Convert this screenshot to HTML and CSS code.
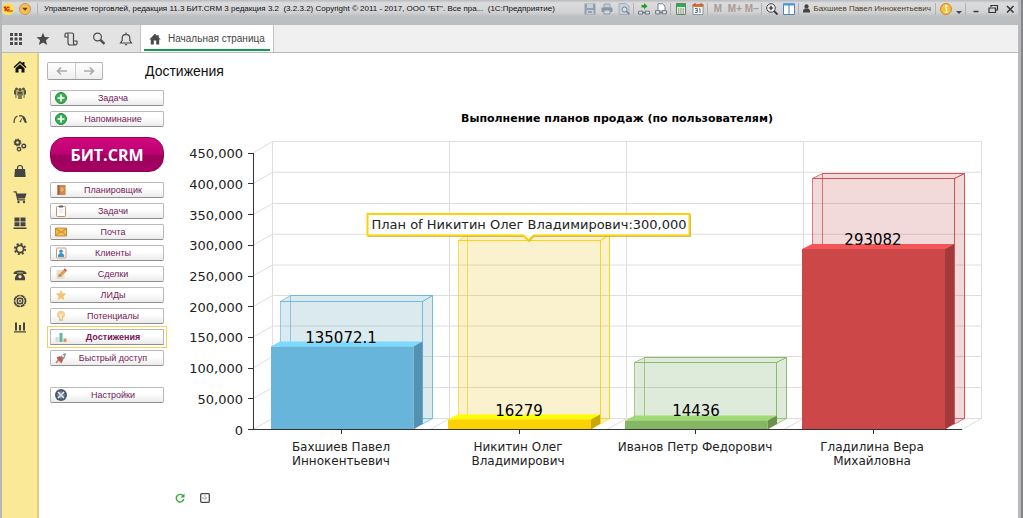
FILE: index.html
```html
<!DOCTYPE html>
<html lang="ru">
<head>
  <meta charset="UTF-8">
  <meta name="viewport" content="width=device-width, initial-scale=1.0">
  <title>Достижения - БИТ.CRM</title>
  <link rel="stylesheet" href="styles.css">
</head>
<body>

<div class="window">
  <!-- Title bar -->
  <header class="titlebar">
    <div class="title-row">
      <button class="round-btn logo-1c" aria-label="1С"><svg viewBox="0 0 12 12"><circle cx="6" cy="6" r="6" fill="#ffe14a"/><path d="M1.800 4.800L3.200 3.800V8.200M7.600 4.700C6.600 3.400 4.600 4 4.600 6s1.300 2 2.300 2H10.800M7.600 6.300H6.300" fill="none" stroke="#d8101c" stroke-width="1.200"/></svg></button>
      <button class="round-btn" aria-label="Меню"><svg viewBox="0 0 12 12"><circle cx="6" cy="6" r="5.500" fill="#f7bd55" stroke="#c99645"/><path d="M3.200 4.800h5.600L6 7.800z" fill="#5e4521"/></svg></button>
      <span class="sep"></span>
      <h1 class="app-title">Управление торговлей, редакция 11.3 БИТ.CRM 3 редакция 3.2&nbsp; (3.2.3.2) Copyright © 2011 - 2017, ООО "БТ". Все пра...&nbsp; (1С:Предприятие)</h1>
      <div class="tools">
        <button aria-label="Сохранить"><svg viewBox="0 0 12 12"><path d="M.5.5h11v11H.5z" fill="#92a1ae"/><path d="M3 1h6v4H3zM2.500 7h7v4h-7z" fill="#c9d0d6"/><path d="M4 8h4v2H4z" fill="#92a1ae"/></svg></button>
        <button aria-label="Печать"><svg viewBox="0 0 12 12"><path d="M3 1h6v4H3z" fill="#c5ccd3" stroke="#98a5b1"/><path d="M.5 4.500h11V9H.5z" fill="#8796a4"/><path d="M3 7h6v4H3z" fill="#d4d9dd" stroke="#8796a4"/></svg></button>
        <button aria-label="Просмотр"><svg viewBox="0 0 12 12"><path d="M1 .5h7l3 3v8H1z" fill="#c8cfd5" stroke="#a5b0ba"/><circle cx="6.500" cy="6.500" r="2.500" fill="#d9e0e5" stroke="#708698"/><path d="M8.300 8.300l3 3" stroke="#708698" stroke-width="1.600"/></svg></button>
        <span class="sep"></span>
        <button aria-label="Получить ссылку"><svg viewBox="0 0 12 12"><path d="M.6 8.200h4.300v2.800H.6zM7.100 8.200h4.300v2.800H7.100zM4 9.600h4" fill="#e5e8eb" stroke="#667481"/><path d="M6 0l3.500 3.300-3.500 3V4.500H3.500V2H6z" fill="#23a126"/></svg></button>
        <button aria-label="Перейти по ссылке"><svg viewBox="0 0 12 12"><path d="M3 7V.8h4.500L10 3v4" fill="#fff" stroke="#71808d"/><path d="M.6 7.700h4.300v3.200H.6zM7.100 7.700h4.300v3.200H7.100zM4 9.300h4" fill="#e5e8eb" stroke="#667481"/></svg></button>
        <span class="sep"></span>
        <button aria-label="Калькулятор"><svg viewBox="0 0 12 12"><path d="M1.500.5h9v11h-9z" fill="#e7ece7" stroke="#688068"/><path d="M2 1h8v3H2z" fill="#24b54a"/><path d="M3 6h6M3 8h6M3 10h6" stroke="#587158" stroke-dasharray="1.300 1"/></svg></button>
        <button aria-label="Календарь"><svg viewBox="0 0 12 12"><path d="M1 1.500h10v10H1z" fill="#fff" stroke="#8491a0"/><path d="M.5 1h11v3H.5z" fill="#d87536"/><path d="M3 0v2.500M9 0v2.500" stroke="#945020"/><path d="M3 5.500h2.300v4H3M3.500 7.500h1.800M7 6.200l1-.7v4.500" fill="none" stroke="#536984"/></svg></button>
        <span class="sep"></span>
        <button class="mem">M</button>
        <button class="mem">M+</button>
        <button class="mem">M−</button>
        <span class="sep"></span>
        <button aria-label="Масштаб"><svg viewBox="0 0 12 12"><circle cx="5" cy="5" r="4.300" fill="#f5f5f5" stroke="#444"/><path d="M8.200 8.200L11.500 11.500" stroke="#333" stroke-width="1.800"/><path d="M2.800 5h4.400M5 2.800v4.400" stroke="#222" stroke-width="1.200"/></svg></button>
        <button aria-label="Окна"><svg viewBox="0 0 12 12"><path d="M.5 1h11v10.500H.5zM6 1v10" fill="#fff" stroke="#5083b0"/><path d="M0 .5h12v2H0z" fill="#3e9bdf"/></svg></button>
        <span class="sep"></span>
        <button class="user"><svg viewBox="0 0 8 10"><circle cx="4" cy="2.600" r="2.400" fill="#444"/><path d="M0 9.500V7l2-2h4l2 2v2.500z" fill="#444"/></svg>Бахшиев Павел Иннокентьевич</button>
        <span class="sep"></span>
        <button aria-label="О программе"><svg viewBox="0 0 12 12"><circle cx="6" cy="6" r="5.500" fill="#f6bd3f" stroke="#c98d25"/><path d="M5 5h1.500v4M4.800 9.200h3M5.600 2.300h1.300v1.300H5.600z" fill="none" stroke="#fff"/></svg></button>
        <button class="narrow" aria-label="Ещё"><svg viewBox="0 0 8 12"><path d="M1 8h6L4 11z" fill="#444"/></svg></button>
        <span class="sep"></span>
        <button aria-label="Свернуть"><svg viewBox="0 0 12 12"><path d="M3.500 8.500h5" stroke="#333" stroke-width="1.400"/></svg></button>
        <button aria-label="Восстановить"><svg viewBox="0 0 12 12"><path d="M4 4V2.500h6.500V7H8.500M2 5h6.500v4.500H2z" fill="none" stroke="#333" stroke-width="1.200"/></svg></button>
        <button aria-label="Закрыть"><svg viewBox="0 0 12 12"><path d="M3 3l6.500 6.500M9.500 3L3 9.500" stroke="#333" stroke-width="1.500"/></svg></button>
      </div>
    </div>
  </header>

  <!-- Tabs -->
  <nav class="tabbar">
    <div class="quick">
      <button aria-label="Разделы"><svg viewBox="0 0 14 14"><path d="M1 1h3v3H1zM5.500 1h3v3h-3zM10 1h3v3h-3zM1 5.500h3v3H1zM5.500 5.500h3v3h-3zM10 5.500h3v3h-3zM1 10h3v3H1zM5.500 10h3v3h-3zM10 10h3v3h-3z" fill="#4a4a4a"/></svg></button>
      <button aria-label="Избранное"><svg viewBox="0 0 14 14"><path d="M7 .8l1.800 4.200 4.700.3-3.600 3 1.200 4.700L7 10.500 2.900 13l1.200-4.700-3.600-3L5.200 5z" fill="#4a4a4a"/></svg></button>
      <button aria-label="История"><svg viewBox="0 0 14 14"><path d="M3.500 5H1V2.500Q1 1 2.500 1H8Q9.500 1 9.500 2.500V9H13v2.300Q13 13 11.500 13H6Q4 13 4 11V2.500Q4 1 2.500 1M9.500 9v2Q9.500 13 11.500 13" fill="none" stroke="#4a4a4a" stroke-width="1.200"/></svg></button>
      <button aria-label="Поиск"><svg viewBox="0 0 14 14"><circle cx="5.500" cy="5" r="3.900" fill="none" stroke="#4a4a4a" stroke-width="1.200"/><path d="M8.300 7.800l4.200 4" stroke="#4a4a4a" stroke-width="2.300"/></svg></button>
      <button aria-label="Оповещения"><svg viewBox="0 0 14 14"><path d="M1.500 11h11L10.800 8.500V5.500Q10.500 2.500 7 2.300 3.500 2.500 3.200 5.500V8.500zM7 .5v2" fill="none" stroke="#4a4a4a" stroke-width="1.200"/><path d="M5.500 12h3L7 13.800z" fill="#4a4a4a"/></svg></button>
    </div>
    <a class="tab active" href="#"><svg viewBox="0 0 12 12"><path d="M6 .8L.3 6.500h1.500V11.500h3V7.500h2.400v4h3V6.500h1.500L9.700 4.500V2H8.300v1.100z" fill="#4a4a4a"/></svg><span>Начальная страница</span></a>
  </nav>

  <div class="workspace">
    <!-- Sections -->
    <nav class="sections">
      <a href="#" aria-label="Главное"><svg viewBox="0 0 14 14"><path d="M7 1L.5 7l1 1L7 3l5.500 5 1-1L11.500 5V2h-2v1.200zM2.500 8.300L7 4.300l4.500 4v4.200h-3V9h-3v3.500h-3z" fill="#111"/></svg></a>
      <a href="#" aria-label="CRM"><svg viewBox="0 0 14 14"><path d="M2.500 4Q1 3 1 5v3l1.500 1v3h1V5zM11.500 4Q13 3 13 5v3l-1.500 1v3h-1V5zM4 5.500h6V9L9 10v3H5v-3L4 9z" fill="#55523f"/><circle cx="7" cy="3.700" r="1.800" fill="#55523f"/><circle cx="3.500" cy="3" r="1.500" fill="#55523f"/><circle cx="10.500" cy="3" r="1.500" fill="#55523f"/><path d="M4 6v5M10 6v5M6 8v5M8 8v5" stroke="#e5d88d" stroke-width=".6"/></svg></a>
      <a href="#" aria-label="Показатели"><svg viewBox="0 0 14 14"><path d="M1 11Q1 5.500 4.500 4.200M6 3.800Q12.500 3 13 11" fill="none" stroke="#55523f" stroke-width="1.300"/><path d="M9.500 5L7.800 10.500 6.400 9.800z" fill="#444"/><path d="M10 5l2.800 5.500" stroke="#444" stroke-width="1.800"/></svg></a>
      <a href="#" aria-label="Процессы"><svg viewBox="0 0 14 14"><g fill="none" stroke="#444"><circle cx="4.500" cy="4.500" r="2.300" stroke-width="1.900"/><circle cx="4.500" cy="4.500" r="3.500" stroke-dasharray="1.300 1.400"/><circle cx="10.800" cy="8" r="1.800" stroke-width="1.400"/><circle cx="6" cy="11.200" r="1.700" stroke-width="1.300"/></g></svg></a>
      <a href="#" aria-label="Продажи"><svg viewBox="0 0 14 14"><path d="M2 5h10l.7 8H1.300z" fill="#444"/><path d="M4.500 7V4Q4.500 1.500 7 1.500T9.500 4v3" fill="none" stroke="#444" stroke-width="1.200"/></svg></a>
      <a href="#" aria-label="Закупки"><svg viewBox="0 0 14 14"><path d="M.5 1.800H3L4.800 9.800H12" fill="none" stroke="#444" stroke-width="1.300"/><path d="M3.500 3.500h10l-1.500 5H4.800z" fill="#444"/><circle cx="5.500" cy="12" r="1.200" fill="#444"/><circle cx="11" cy="12" r="1.200" fill="#444"/></svg></a>
      <a href="#" aria-label="Склад"><svg viewBox="0 0 14 14"><path d="M1.500 1.500h5v4h-5zM7.500 1.500h5v4h-5zM1.500 6.300h5v4h-5zM7.500 6.300h5v4h-5zM.5 11.500h13V13H.5z" fill="#444"/></svg></a>
      <a href="#" aria-label="Производство"><svg viewBox="0 0 14 14"><circle cx="7" cy="7" r="3.600" fill="none" stroke="#444" stroke-width="1.800"/><circle cx="7" cy="7" r="5.200" fill="none" stroke="#444" stroke-width="1.800" stroke-dasharray="2.040 2.040"/></svg></a>
      <a href="#" aria-label="Телефония"><svg viewBox="0 0 14 14"><path d="M.5 6Q0 2.500 7 2.500T13.500 6H9.800V4.500H4.200V6zM4.500 5.300h5l2.500 4v2.900H2V9.300z" fill="#444"/><circle cx="7" cy="8.700" r="1.600" fill="#fae996"/></svg></a>
      <a href="#" aria-label="Поддержка"><svg viewBox="0 0 14 14"><circle cx="7" cy="7" r="5.500" fill="none" stroke="#444" stroke-width="1.700" stroke-dasharray="3.500 .8"/><circle cx="7" cy="7" r="2.800" fill="none" stroke="#444" stroke-width="1.400"/><circle cx="7" cy="7" r="1" fill="#444"/><path d="M2.500 2.500L5 5M11.500 2.500L9 5M2.500 11.500L5 9M11.500 11.500L9 9" stroke="#444"/></svg></a>
      <a href="#" aria-label="Отчёты"><svg viewBox="0 0 14 14"><path d="M2 2.500h2v8H2zM6 5h2v5.500H6zM10 2.500h2v8h-2zM1 11.300h12v1.200H1z" fill="#444"/></svg></a>
    </nav>

    <main class="page">
      <div class="page-head">
        <div class="history">
          <button aria-label="Назад"><svg viewBox="0 0 12 10"><path d="M5 1.500L1.500 5 5 8.500M2 5h9" fill="none" stroke="#aaa" stroke-width="1.700"/></svg></button>
          <button aria-label="Вперёд"><svg viewBox="0 0 12 10"><path d="M7 1.500L10.500 5 7 8.500M10 5H1" fill="none" stroke="#aaa" stroke-width="1.700"/></svg></button>
        </div>
        <h2>Достижения</h2>
      </div>

      <div class="columns">
        <aside class="menu">
          <button class="menu-btn"><svg viewBox="0 0 12 12"><circle cx="6" cy="6" r="5.500" fill="#35ae56" stroke="#25883d"/><path d="M6 2.500v7M2.500 6h7" stroke="#fff" stroke-width="1.700"/></svg><span>Задача</span></button>
          <button class="menu-btn"><svg viewBox="0 0 12 12"><circle cx="6" cy="6" r="5.500" fill="#35ae56" stroke="#25883d"/><path d="M6 2.500v7M2.500 6h7" stroke="#fff" stroke-width="1.700"/></svg><span>Напоминание</span></button>
          <button class="brand">БИТ.CRM</button>
          <button class="menu-btn"><svg viewBox="0 0 12 12"><path d="M2.500 1h8v10h-8z" fill="#c9875a"/><path d="M2.500 1h2v10h-2z" fill="#9e6038"/><path d="M6 4h2v3H6zM10.500 2v2M10.500 5v2M10.500 8v2" fill="#f2b75c" stroke="#f0b25e"/></svg><span>Планировщик</span></button>
          <button class="menu-btn"><svg viewBox="0 0 12 12"><rect x="1.500" y="1.500" width="9" height="10" rx="1" fill="#fff" stroke="#cf8961"/><path d="M4 .5h4v2H4z" fill="#5d656d"/><path d="M3.500 5h5M3.500 7h5" stroke="#ccd4da" stroke-width=".7"/></svg><span>Задачи</span></button>
          <button class="menu-btn"><svg viewBox="0 0 12 12"><path d="M.5 2h11v8H.5z" fill="#f1bd54" stroke="#c78d32"/><path d="M.5 2.500L6 6.500l5.500-4M1 9.500L4.500 6M11 9.500L7.500 6" fill="none" stroke="#a87427" stroke-width=".8"/></svg><span>Почта</span></button>
          <button class="menu-btn"><svg viewBox="0 0 12 12"><rect x="1.500" y="1" width="9.500" height="10" rx="1" fill="#fff" stroke="#d19672"/><circle cx="6" cy="4.200" r="1.800" fill="#3f95c4"/><path d="M3 10V8l2-2h2l2.200 2v2z" fill="#3f95c4"/></svg><span>Клиенты</span></button>
          <button class="menu-btn"><svg viewBox="0 0 12 12"><path d="M1.500 2h8v9h-8z" fill="#e3e1d6"/><path d="M2.500 9.500L4 6.500l5-5L11.500 3.500 6 8.500z" fill="#e79c52"/><path d="M8.500 1.500L10 .5l1.800 1.800L10.800 3.500z" fill="#bc4d3b"/><path d="M4 6.500l2 2" stroke="#9b5635"/></svg><span>Сделки</span></button>
          <button class="menu-btn"><svg viewBox="0 0 12 12"><path d="M6 .8l1.500 3.400 4 .3-3 2.700.8 4L6 9.200 2.700 11.200l.8-4-3-2.700 4-.3z" fill="#f3c477"/></svg><span>ЛИДы</span></button>
          <button class="menu-btn"><svg viewBox="0 0 12 12"><circle cx="6" cy="4.800" r="4" fill="#f8ce8a"/><path d="M4 8h4v3H4z" fill="#ddc69f"/><path d="M4 4l2 1.500L8 4M6 5.500V9" fill="none" stroke="#fff"/></svg><span>Потенциалы</span></button>
          <button class="menu-btn current"><svg viewBox="0 0 12 12"><path d="M.5 6h3v5h-3z" fill="#d2dcd0"/><path d="M4.500 2h3v9h-3z" fill="#5fb7a5"/><path d="M8.500 7.500h3V11h-3z" fill="#df965e"/></svg><span>Достижения</span></button>
          <button class="menu-btn"><svg viewBox="0 0 12 12"><path d="M4.500 7.500Q6 2 11 1 10.500 6 6.500 9z" fill="#879197"/><path d="M5 4L1.500 5.500 3 8l1 1 2.500 2.500L8 8z" fill="#bf5c50"/><path d="M3.500 8L1 11" stroke="#cf7665" stroke-width="1.600"/><circle cx="8" cy="4" r="1" fill="#fff"/></svg><span>Быстрый доступ</span></button>
          <button class="menu-btn settings"><svg viewBox="0 0 12 12"><circle cx="6" cy="6" r="6" fill="#4a5872"/><path d="M3 3l6 6M9 3L3 9" stroke="#fff" stroke-width="1.500"/><path d="M6 2v8M2 6h8" stroke="#b9c4d4" stroke-width=".7"/></svg><span>Настройки</span></button>
        </aside>

        <section class="report">
          <svg class="chart" viewBox="170 100 840 380" role="img" aria-label="Выполнение планов продаж">
            <text class="chart-title" x="617" y="122">Выполнение планов продаж (по пользователям)</text>

            <!-- grid -->
            <path class="grid" d="M253 153l19.500-11.500h709M253 183.700l19.500-11.500h709M253 214.500l19.500-11h709M253 245.200l19.500-11h709M253 276l19.500-11h709M253 306.500l19.500-11h709M253 337.200l19.500-11.200h709M253 368l19.500-11.500h709M253 398.700l19.500-11.200h709M253 429.500l19.500-11h709M272.500 141.500v277M449.500 141.500v277M626.500 141.500v277M803.500 141.500v277M981.500 141.500v277M430 429.500l19.500-11M607 429.500l19.500-11M784 429.500l19.500-11M962 429.500l19.500-11"/>

            <!-- bars: plan behind, fact in front -->
            <g class="bar blue" transform="translate(271 0)">
              <path class="plan" d="M9.500 301.500h142V424H9.500zM19.500 295.500h142V418.500h-142zM9.500 301.500l10-6h142l-10 6zM151.500 301.500l10-6V418.500l-10 5.500z"/>
              <path class="top" d="M0 346.500l9-5h142.500l-9 5z"/>
              <path class="side" d="M142.500 346.500l9-5V424l-9 5.500z"/>
              <path class="front" d="M0 346.500h142.500v83H0z"/>
            </g>
            <g class="bar yellow" transform="translate(448 0)">
              <path class="plan" d="M10.500 240.500h142V424h-142zM19.500 234.500h142V418.500h-142zM10.500 240.500l9-6h142l-9 6zM152.500 240.500l9-6V418.500l-9 5.500z"/>
              <path class="top" d="M0 419.500l10-5h142l-9 5z"/>
              <path class="side" d="M143 419.500l9-5V424l-9 5.500z"/>
              <path class="front" d="M0 419.500h143v10H0z"/>
            </g>
            <g class="bar green" transform="translate(625 0)">
              <path class="plan" d="M9.500 362.500h142V424H9.500zM19.500 357.500h142V418.500h-142zM9.500 362.500l10-5h142l-10 5zM151.500 362.500l10-5V418.500l-10 5.500z"/>
              <path class="top" d="M0 420.500l10-5h142l-9.500 5z"/>
              <path class="side" d="M142.500 420.500l9.500-5V424l-9.500 5.500z"/>
              <path class="front" d="M0 420.500h142.500v9H0z"/>
            </g>
            <g class="bar red" transform="translate(802 0)">
              <path class="plan" d="M10.500 178.500h142V424h-142zM20.500 173.500h142V418.500h-142zM10.500 178.500l10-5h142l-10 5zM152.500 178.500l10-5V418.500l-10 5.500z"/>
              <path class="top" d="M0 249l10-5h142l-9 5z"/>
              <path class="side" d="M143 249l9-5V424l-9 5.500z"/>
              <path class="front" d="M0 249h143v180.500H0z"/>
            </g>

            <!-- axes -->
            <path class="axis" d="M253.500 153v276.500M248 153.500h5M248 183.500h5M248 214.500h5M248 245.500h5M248 276.500h5M248 306.500h5M248 337.500h5M248 368.500h5M248 398.500h5M248 429.500h714M341.500 430v4M519.500 430v4M695.500 430v4M873.500 430v4"/>
            <g class="y-labels">
              <text x="243" y="158">450,000</text>
              <text x="243" y="189">400,000</text>
              <text x="243" y="220">350,000</text>
              <text x="243" y="250">300,000</text>
              <text x="243" y="281">250,000</text>
              <text x="243" y="312">200,000</text>
              <text x="243" y="342">150,000</text>
              <text x="243" y="373">100,000</text>
              <text x="243" y="404">50,000</text>
              <text x="243" y="435">0</text>
            </g>
            <g class="x-labels">
              <text x="341" y="451">Бахшиев Павел<tspan x="341" dy="14">Иннокентьевич</tspan></text>
              <text x="518" y="451">Никитин Олег<tspan x="518" dy="14">Владимирович</tspan></text>
              <text x="695" y="451">Иванов Петр Федорович</text>
              <text x="872" y="451">Гладилина Вера<tspan x="872" dy="14">Михайловна</tspan></text>
            </g>
            <g class="values">
              <text x="341" y="343">135072.1</text>
              <text x="519" y="416">16279</text>
              <text x="696" y="416">14436</text>
              <text x="873" y="245">293082</text>
            </g>

            <!-- balloon -->
            <g class="balloon">
              <path class="shadow" d="M368 215h323v22H534l-5 5-5-5H368z"/>
              <path class="box" d="M367.500 214h322v21.500H533.500l-5 5-5-5h-156z"/>
              <text x="529" y="229">План of Никитин Олег Владимирович:300,000</text>
            </g>
          </svg>
          <div class="report-tools">
            <button aria-label="Обновить"><svg viewBox="0 0 10 10"><path d="M8.200 3A3.800 3.800 0 1 0 8.800 6" fill="none" stroke="#35ad3d" stroke-width="1.400"/><path d="M9.500.5v4h-4z" fill="#35ad3d"/></svg></button>
            <button aria-label="Развернуть"><svg viewBox="0 0 10 10"><rect x=".7" y=".7" width="8.600" height="8.600" rx="1" fill="#fff" stroke="#4a4a4a" stroke-width="1.300"/><path d="M5 2v6M2 5h6" stroke="#999" stroke-dasharray="2 1"/></svg></button>
          </div>
        </section>
      </div>
    </main>
  </div>
</div>

</body>
</html>
```
FILE: styles.css
```css
* {
  box-sizing: border-box;
}

body {
  margin: 0;
  font-family: "Liberation Sans", Arial, sans-serif;
  font-size: 10px;
  color: #222;
}

button {
  font-family: inherit;
  padding: 0;
  border: none;
  background: none;
  cursor: pointer;
}

svg {
  display: block;
}

.window {
  display: flex;
  flex-direction: column;
  min-height: 100vh;
  padding-right: 3px;
  border-left: 2px solid #b6b6ba;
  border-right: 2px solid #85868a;
  background-color: #b9babd;
}

/* Title bar */
.titlebar {
  height: 25px;
  background: linear-gradient(#b9babd 0, #dcdcde 3px, #d2d3d5 12px, #bfc0c2 16px, #bbbcbf 25px);
}

.title-row {
  display: flex;
  align-items: center;
  height: 17px;
}

.round-btn {
  flex: none;
  width: 12px;
  margin-right: 5px;
}

.sep {
  flex: none;
  width: 1px;
  height: 12px;
  margin: 0 1px;
  background-color: #b2b2b5;
}

.app-title {
  margin: 0 0 0 5px;
  font-size: 8px;
  font-weight: normal;
  color: #111;
  white-space: nowrap;
}

.tools {
  display: flex;
  align-items: center;
  margin-left: auto;
}

.tools button {
  display: flex;
  flex: none;
  align-items: center;
  justify-content: center;
  width: 17px;
  height: 16px;
  font-size: 10px;
}

.tools svg {
  width: 12px;
  height: 12px;
}

.tools .mem {
  color: #ab9b93;
  font-weight: bold;
}

.tools .narrow {
  width: 10px;
}

.tools .narrow svg {
  width: 8px;
}

.tools .user {
  gap: 3px;
  width: auto;
  padding: 0 3px;
  font-size: 8px;
  color: #4d3f20;
}

.tools .user svg {
  width: 7px;
  height: 9px;
}

/* Tabs */
.tabbar {
  display: flex;
  height: 28px;
  background-color: #f0f0f0;
  border-bottom: 1px solid #bbb;
}

.quick {
  display: flex;
  justify-content: space-around;
  width: 139px;
  background-color: #e3e3e3;
  border-right: 1px solid #c2c2c2;
}

.quick svg {
  width: 14px;
  height: 14px;
}

.tab {
  display: flex;
  align-items: center;
  gap: 7px;
  padding: 0 8px;
  border-right: 1px solid #c2c2c2;
  background: #fff linear-gradient(#139b50, #139b50) no-repeat center 24px / calc(100% - 6px) 2px;
  color: #444;
  font-size: 10px;
  text-decoration: none;
}

.tab svg {
  width: 12px;
  height: 12px;
}

/* Body */
.workspace {
  display: flex;
  flex: 1;
  background-color: #fff;
}

.sections {
  display: flex;
  flex: none;
  flex-direction: column;
  align-items: center;
  gap: 12px;
  width: 37px;
  padding-top: 7px;
  background-color: #fae996;
  border-right: 2px solid #dfce82;
}

.sections svg {
  width: 14px;
  height: 14px;
}

.page {
  flex: 1;
  padding: 9px 8px 0 8px;
}

.page-head {
  display: flex;
  align-items: center;
  gap: 42px;
  height: 18px;
}

.page-head h2 {
  margin: 0;
  font-size: 14px;
  font-weight: normal;
  color: #111;
}

.history {
  display: flex;
  height: 18px;
  border: 1px solid #b5b5b5;
  border-bottom-color: #999;
  border-radius: 2px;
  background: linear-gradient(#fff, #eee);
}

.history button {
  display: flex;
  align-items: center;
  justify-content: center;
  width: 27px;
}

.history button + button {
  border-left: 1px solid #ccc;
}

.history svg {
  width: 12px;
  height: 10px;
}

.columns {
  display: flex;
  gap: 6px;
}

.menu {
  display: flex;
  flex: none;
  flex-direction: column;
  gap: 5px;
  width: 117px;
  padding: 10px 0 0 3px;
}

.menu-btn {
  display: flex;
  align-items: center;
  height: 16px;
  padding: 0 4px;
  border: 1px solid #b9b9b9;
  border-bottom-color: #8f8f8f;
  border-radius: 2px;
  background: linear-gradient(#fff 40%, #ebebeb);
  color: #741858;
  font-size: 9px;
}

.menu-btn svg {
  flex: none;
  width: 12px;
  height: 12px;
}

.menu-btn span {
  flex: 1;
  text-align: center;
}

.menu-btn.current {
  border-radius: 0;
  outline: 1px solid #f5d254;
  outline-offset: 2px;
  font-weight: bold;
}

.menu-btn.settings {
  margin-top: 16px;
}

.brand {
  height: 35px;
  margin: 5px 0;
  border: 1px solid #8e0558;
  border-radius: 15px;
  background: linear-gradient(#d2087f, #bc0070 48%, #9c005c 54%, #a50062);
  color: #fff;
  font-family: "Open Sans", sans-serif;
  font-size: 16px;
  font-weight: bold;
}

/* Report */
.report {
  flex: 1;
  min-width: 0;
  padding-top: 20px;
}

.chart {
  width: 100%;
  height: auto;
  font-family: "DejaVu Sans", Verdana, sans-serif;
  font-size: 13px;
}

.chart text {
  fill: #222;
}

.chart .chart-title {
  font-size: 11px;
  font-weight: bold;
  text-anchor: middle;
  fill: #000;
}

.grid {
  fill: none;
  stroke: #dedede;
}

.axis {
  fill: none;
  stroke: #333;
}

.y-labels {
  text-anchor: end;
}

.x-labels,
.values,
.balloon {
  text-anchor: middle;
}

.x-labels {
  font-size: 12px;
}

.chart .values text {
  font-size: 15px;
  fill: #000;
}

.plan {
  fill-opacity: 0.2;
  stroke-opacity: 0.7;
}

.blue .plan { fill: #4594b0; stroke: #67b7dc; }
.blue .front { fill: #67b5da; }
.blue .top { fill: #7bdaff; }
.blue .side { fill: #5291b0; }

.yellow .plan { fill: #e5bd10; stroke: #fcd202; }
.yellow .front { fill: #fdd202; }
.yellow .top { fill: #fffb00; }
.yellow .side { fill: #caa802; }

.green .plan { fill: #609c48; stroke: #84b761; }
.green .front { fill: #84b761; }
.green .top { fill: #9edb74; }
.green .side { fill: #6a924e; }

.red .plan { fill: #c04048; stroke: #cc4748; }
.red .front { fill: #cc4748; }
.red .top { fill: #f45556; }
.red .side { fill: #a3393a; }

.balloon .shadow {
  fill: #000;
  fill-opacity: 0.3;
}

.balloon .box {
  fill: #fff;
  stroke: #fcd202;
  stroke-width: 2;
}

.report-tools {
  display: flex;
  gap: 15px;
  padding: 13px 5px;
}

.report-tools svg {
  width: 10px;
  height: 10px;
}
```
